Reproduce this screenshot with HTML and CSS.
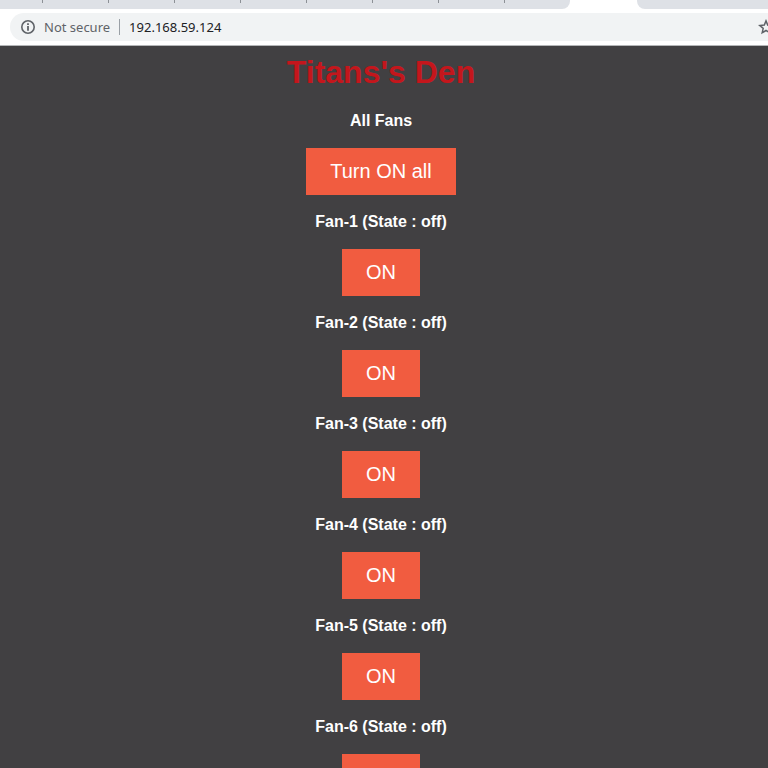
FILE: index.html
```html
<!DOCTYPE html>
<html lang="en">
<head>
<meta charset="utf-8">
<meta name="viewport" content="width=device-width, initial-scale=1">
<title>Titans's Den</title>
<link rel="stylesheet" href="styles.css">
</head>
<body>
<header class="browser">
  <div class="tabs">
    <div class="tabs-left">
      <i class="tick"></i><i class="tick"></i><i class="tick"></i><i class="tick"></i><i class="tick"></i><i class="tick"></i><i class="tick"></i><i class="tick"></i>
    </div>
    <div class="tabs-right"></div>
  </div>
  <div class="toolbar">
    <div class="omnibox">
      <svg class="info" viewBox="0 0 16 16" aria-hidden="true">
        <circle cx="8" cy="8" r="6.2" fill="none" stroke="currentColor" stroke-width="1.6"/>
        <path d="M7.1 4.3h1.8v1.7H7.1zM7.1 7.1h1.8v4.6H7.1z" fill="currentColor"/>
      </svg>
      <span class="security">Not secure</span>
      <span class="divider"></span>
      <span class="url">192.168.59.124</span>
      <svg class="star" viewBox="0 0 16 16" aria-hidden="true">
        <path d="M8 1.9l1.7 4.2 4.5.4-3.4 2.9 1 4.4L8 11.5l-3.8 2.3 1-4.4-3.4-2.9 4.5-.4z" fill="none" stroke="currentColor" stroke-width="1.5"/>
      </svg>
    </div>
  </div>
</header>
<main class="page">
  <h1>Titans's Den</h1>
  <p>All Fans</p>
  <button type="button">Turn ON all</button>
  <p>Fan-1 (State : off)</p>
  <button type="button">ON</button>
  <p>Fan-2 (State : off)</p>
  <button type="button">ON</button>
  <p>Fan-3 (State : off)</p>
  <button type="button">ON</button>
  <p>Fan-4 (State : off)</p>
  <button type="button">ON</button>
  <p>Fan-5 (State : off)</p>
  <button type="button">ON</button>
  <p>Fan-6 (State : off)</p>
  <button type="button">ON</button>
</main>
</body>
</html>
```
FILE: styles.css
```css
* {
  box-sizing: border-box;
}

body {
  margin: 0;
  height: 100vh;
  display: flex;
  flex-direction: column;
  overflow: hidden;
  background: #414042;
  font-family: "Liberation Sans", Arial, sans-serif;
}

.browser {
  flex: none;
  background: #fff;
  border-bottom: 1px solid #b4b6b8;
}

.tabs {
  display: flex;
  height: 9px;
}

.tabs-left {
  display: flex;
  gap: 65px;
  width: 570px;
  padding-left: 42px;
  background: #dee1e6;
  border-bottom-right-radius: 8px;
}

.tick {
  width: 1px;
  height: 3px;
  background: #8d9196;
}

.tabs-right {
  flex: 1;
  margin-left: 67px;
  background: #dee1e6;
  border-bottom-left-radius: 8px;
}

.toolbar {
  padding: 4px 0 4px 10px;
  overflow: hidden;
}

.omnibox {
  display: flex;
  align-items: center;
  height: 28px;
  padding-left: 10px;
  background: #f1f3f4;
  border-radius: 14px 0 0 14px;
  color: #5f6368;
  font: 13px/20px "Noto Sans", "Open Sans", sans-serif;
}

.info,
.star {
  flex: none;
  width: 16px;
  height: 16px;
}

.security {
  margin-left: 8px;
}

.divider {
  width: 1px;
  height: 16px;
  margin: 0 9px;
  background: #9aa0a6;
}

.url {
  color: #202124;
}

.star {
  margin-left: auto;
  margin-right: -6px;
}

.page {
  flex: 1;
  min-height: 0;
  overflow: hidden;
  padding: 8px 6px 0 0;
  display: flex;
  flex-direction: column;
  align-items: center;
}

h1 {
  flex: none;
  margin: 0 0 2px;
  color: #c4161c;
  font-size: 32px;
  line-height: 37px;
}

p {
  flex: none;
  margin: 18px 0;
  color: #fff;
  font-size: 16px;
  font-weight: bold;
  line-height: 18px;
}

h1 + p {
  margin-top: 19px;
}

button {
  flex: none;
  padding: 12px 24px;
  border: 0;
  background: #f15c40;
  color: #fff;
  font: 20px/23px "Liberation Sans", Arial, sans-serif;
}
```
